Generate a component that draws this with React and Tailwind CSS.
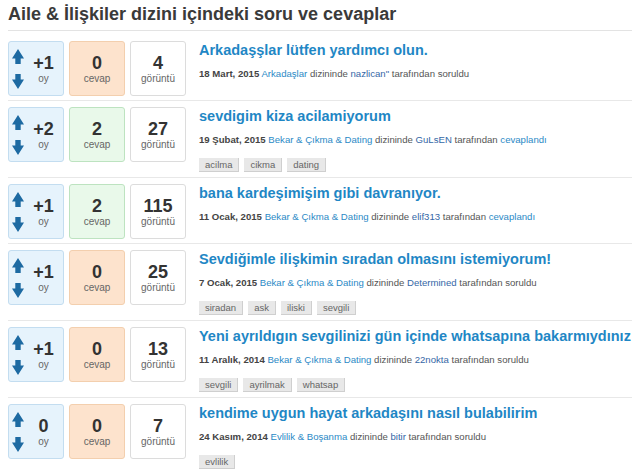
import React from 'react';

const questions = [
  {
    id: 1,
    votes: '+1',
    answers: 0,
    views: 4,
    title: 'Arkadaşşlar lütfen yardımcı olun.',
    date: '18 Mart, 2015',
    category: 'Arkadaşlar',
    author: 'nazlican"',
    action: 'soruldu',
    tags: []
  },
  {
    id: 2,
    votes: '+2',
    answers: 2,
    views: 27,
    title: 'sevdigim kiza acilamiyorum',
    date: '19 Şubat, 2015',
    category: 'Bekar & Çıkma & Dating',
    author: 'GuLsEN',
    action: 'cevaplandı',
    tags: ['acilma', 'cikma', 'dating']
  },
  {
    id: 3,
    votes: '+1',
    answers: 2,
    views: 115,
    title: 'bana kardeşimişim gibi davranıyor.',
    date: '11 Ocak, 2015',
    category: 'Bekar & Çıkma & Dating',
    author: 'elif313',
    action: 'cevaplandı',
    tags: []
  },
  {
    id: 4,
    votes: '+1',
    answers: 0,
    views: 25,
    title: 'Sevdiğimle ilişkimin sıradan olmasını istemiyorum!',
    date: '7 Ocak, 2015',
    category: 'Bekar & Çıkma & Dating',
    author: 'Determined',
    action: 'soruldu',
    tags: ['siradan', 'ask', 'iliski', 'sevgili']
  },
  {
    id: 5,
    votes: '+1',
    answers: 0,
    views: 13,
    title: 'Yeni ayrıldıgın sevgilinizi gün içinde whatsapına bakarmıydınız',
    date: '11 Aralık, 2014',
    category: 'Bekar & Çıkma & Dating',
    author: '22nokta',
    action: 'soruldu',
    tags: ['sevgili', 'ayrilmak', 'whatsap']
  },
  {
    id: 6,
    votes: '0',
    answers: 0,
    views: 7,
    title: 'kendime uygun hayat arkadaşını nasıl bulabilirim',
    date: '24 Kasım, 2014',
    category: 'Evlilik & Boşanma',
    author: 'bitir',
    action: 'soruldu',
    tags: ['evlilik']
  }
];

const Arrow = ({ down }) => (
  <svg width="12" height="15" viewBox="0 0 12 15" className={down ? 'rotate-180' : ''}>
    <path d="M6 0 L12 9.5 L8.7 9.5 L8.7 15 L3.3 15 L3.3 9.5 L0 9.5 Z" fill="#1d6aa2" />
  </svg>
);

const StatBox = ({ value, label, className }) => (
  <div className={`w-[56px] h-[55px] rounded-[3px] border flex flex-col items-center justify-center ${className}`}>
    <span className="text-[18px] leading-[20px] font-bold text-[#333]">{value}</span>
    <span className="text-[10px] leading-[12px] text-[#666]">{label}</span>
  </div>
);

const App = () => {
  return (
    <div className="w-[640px] h-[470px] overflow-hidden bg-white px-[8px] font-['Liberation_Sans',Arial,sans-serif]">
      {/* Header */}
      <h1 className="pt-[3px] pb-[5px] text-[18px] leading-[22px] font-bold text-[#3a3a3a] border-b border-[#e3e3e3]">
        Aile &amp; İlişkiler dizini içindeki soru ve cevaplar
      </h1>

      <div className="mt-[4px]">
        {questions.map((q) => (
          <div key={q.id} className="flex pt-[6px] pb-[4px] border-b border-[#e8e8e8]">
            {/* Stats */}
            <div className="flex gap-[5px] shrink-0">
              <div className="w-[56px] h-[55px] rounded-[3px] border border-[#c3ddf0] bg-[#e6f3fc] flex">
                <div className="flex flex-col justify-between pt-[7px] pb-[6px] pl-[3px]">
                  <Arrow />
                  <Arrow down />
                </div>
                <div className="flex-1 flex flex-col items-center justify-center">
                  <span className="text-[18px] leading-[20px] font-bold text-[#333]">{q.votes}</span>
                  <span className="text-[10px] leading-[12px] text-[#666]">oy</span>
                </div>
              </div>
              <StatBox
                value={q.answers}
                label="cevap"
                className={q.answers > 0 ? 'border-[#bde3c0] bg-[#e9f9ea]' : 'border-[#f3cfae] bg-[#fde3cd]'}
              />
              <StatBox value={q.views} label="görüntü" className="border-[#dcdcdc] bg-white" />
            </div>

            {/* Content */}
            <div className="ml-[13px] min-w-0 -mt-px">
              <div className="text-[14.5px] leading-[20px] font-bold text-[#1f87c5] whitespace-nowrap">
                {q.title}
              </div>
              <div className="mt-[7px] text-[9.6px] leading-[14px] text-[#555] whitespace-nowrap">
                <span className="font-bold text-[#444]">{q.date}</span>{' '}
                <span className="text-[#2b8ac6]">{q.category}</span> dizininde{' '}
                <span className="text-[#3567a6]">{q.author}</span> tarafından{' '}
                {q.action === 'cevaplandı' ? (
                  <span className="text-[#2b8ac6]">{q.action}</span>
                ) : (
                  q.action
                )}
              </div>
              {q.tags.length > 0 && (
                <div className="mt-[11px] mb-[1px] flex gap-[5px]">
                  {q.tags.map((tag) => (
                    <span
                      key={tag}
                      className="h-[14px] px-[6px] text-[9.5px] leading-[13px] text-[#666] bg-[#e8e8e8] border-r border-b border-[#cfcfcf]"
                    >
                      {tag}
                    </span>
                  ))}
                </div>
              )}
            </div>
          </div>
        ))}
      </div>
    </div>
  );
};

export default App;
